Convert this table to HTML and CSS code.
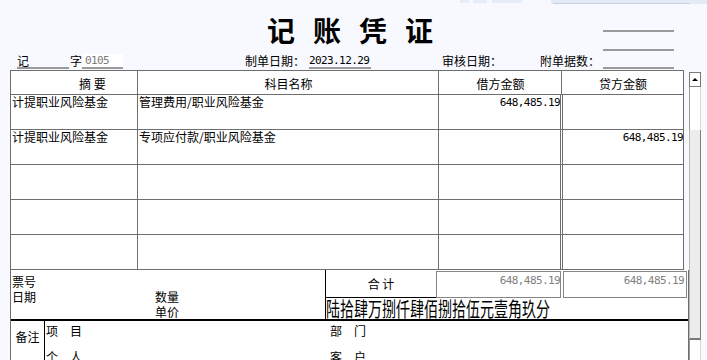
FILE: index.html
```html
<!DOCTYPE html>
<html lang="zh-CN">
<head>
<meta charset="utf-8">
<title>记账凭证</title>
<link rel="stylesheet" href="styles.css">
</head>
<body>
<div class="topbar">
  <span class="seg s1"></span><span class="seg s2"></span><span class="seg s3"></span>
  <span class="tab"><span class="tab-line"></span></span>
</div>
<div class="page">
  <div class="sheet">
    <div class="head">
      <h1 class="title">记账凭证</h1>
      <div class="sign"><i class="sline"></i><i class="sline l2"></i></div>
    </div>
    <div class="meta">
      <span class="fld f-word">记</span>
      <span class="lbl zi">字</span>
      <span class="fld f-no num">0105</span>
      <span class="lbl l-date">制单日期：</span>
      <span class="fld f-date num">2023.12.29</span>
      <span class="lbl l-audit">审核日期：</span>
      <span class="lbl l-att">附单据数：</span>
      <span class="fld f-att"></span>
    </div>
    <div class="ledger">
      <div class="row hdr">
        <div class="c c1 h-zy">摘&nbsp;要</div>
        <div class="c c2">科目名称</div>
        <div class="c c3">借方金额</div>
        <div class="c c4">贷方金额</div>
      </div>
      <div class="row">
        <div class="c c1">计提职业风险基金</div>
        <div class="c c2">管理费用/职业风险基金</div>
        <div class="c c3 num amt">648,485.19</div>
        <div class="c c4 num amt"></div>
      </div>
      <div class="row">
        <div class="c c1">计提职业风险基金</div>
        <div class="c c2">专项应付款/职业风险基金</div>
        <div class="c c3 num amt"></div>
        <div class="c c4 num amt">648,485.19</div>
      </div>
      <div class="row"><div class="c c1"></div><div class="c c2"></div><div class="c c3"></div><div class="c c4"></div></div>
      <div class="row"><div class="c c1"></div><div class="c c2"></div><div class="c c3"></div><div class="c c4"></div></div>
      <div class="row"><div class="c c1"></div><div class="c c2"></div><div class="c c3"></div><div class="c c4"></div></div>
    </div>
    <div class="lower">
      <div class="sum">
        <div class="misc">
          <div class="col-a"><span>票号</span><span>日期</span></div>
          <div class="col-b"><span>数量</span><span>单价</span></div>
        </div>
        <div class="totals">
          <div class="tot-row">
            <div class="tot-label">合&nbsp;计</div>
            <div class="tot-box num">648,485.19</div>
            <div class="tot-box b2 num">648,485.19</div>
          </div>
          <div class="words"><span class="words-txt">陆拾肆万捌仟肆佰捌拾伍元壹角玖分</span></div>
        </div>
      </div>
      <div class="remarks">
        <div class="rm-label">备注</div>
        <div class="rm-body">
          <div class="rm-col"><span>项　目</span><span>个　人</span></div>
          <div class="rm-col c-right"><span>部　门</span><span>客　户</span></div>
        </div>
      </div>
    </div>
  </div>
  <div class="vscroll">
    <div class="sb-btn"><span class="sb-arrow"></span></div>
    <div class="sb-track"></div>
    <div class="sb-thumb"></div>
    <div class="sb-track rest"></div>
  </div>
</div>
</body>
</html>
```

FILE: styles.css
```css
html, body {
  margin: 0;
  padding: 0;
}
body {
  background: #f7f9fe;
  font-family: "Noto Sans CJK SC", "Noto Sans", sans-serif;
  font-size: 12px;
  color: #000;
  width: 707px;
  height: 360px;
  overflow: hidden;
}
.num {
  font-family: "DejaVu Sans Mono", "Liberation Mono", monospace;
  font-size: 11px;
  letter-spacing: -0.6px;
}

/* top strip */
.topbar {
  height: 4px;
  display: flex;
  align-items: stretch;
}
.seg {
  background: #e6edf8;
  height: 3px;
}
.s1 { margin-left: 460px; width: 9px; }
.s2 { margin-left: 4px; width: 14px; }
.s3 { margin-left: 5px; width: 30px; }
.tab {
  margin-left: auto;
  width: 156px;
  background: #e3ebf7;
  display: flex;
  align-items: flex-end;
}
.tab-line {
  display: block;
  margin-left: 2px;
  width: 137px;
  height: 1px;
  background: #c6d2e4;
}

.page {
  display: flex;
}
.sheet {
  width: 689px;
  flex-shrink: 0;
}

/* title */
.head {
  height: 48px;
  display: flex;
}
.title {
  margin: 12px 0 0 267px;
  font-size: 28px;
  line-height: 28px;
  height: 28px;
  letter-spacing: 18px;
  font-weight: bold;
  white-space: nowrap;
}
.sign {
  margin-left: auto;
  margin-right: 15px;
  width: 71px;
  padding-top: 26px;
}
.sline {
  display: block;
  height: 2px;
  background: #9a9a9a;
}
.sline.l2 { margin-top: 17px; }

/* meta */
.meta {
  height: 18px;
  box-sizing: border-box;
  padding-top: 2px;
  display: flex;
  align-items: flex-start;
  white-space: nowrap;
}
.lbl, .fld {
  display: block;
  height: 13px;
  line-height: 13px;
}
.fld {
  border-bottom: 2px solid #9a9a9a;
}
.f-word { margin-left: 17px; width: 52px; }
.zi { margin-left: 1px; width: 12px; }
.f-no {
  width: 38px;
  padding-left: 3px;
  background: #fff;
  color: #7a7a7a;
}
.l-date { margin-left: 122px; width: 60px; }
.f-date { margin-left: 4px; width: 62px; }
.l-audit { margin-left: 71px; width: 60px; }
.l-att { margin-left: 38px; width: 60px; }
.f-att { margin-left: 3px; width: 71px; }

/* ledger */
.ledger {
  margin-left: 10px;
  width: 673px;
  border-left: 1px solid #6e6e6e;
  border-top: 1px solid #6e6e6e;
  background: #fff;
}
.row {
  display: grid;
  grid-template-columns: 127px 301px 121px 124px;
  height: 35px;
}
.row.hdr {
  grid-template-columns: 127px 301px 123px 122px;
  height: 24px;
}
.c {
  box-sizing: border-box;
  border-bottom: 1px solid #6e6e6e;
  border-right: 1px solid #6e6e6e;
  line-height: 14px;
  padding-left: 1px;
  white-space: nowrap;
}
.row .c3 { border-right: none; }
.row .c4 { border-left: 3px double #6e6e6e; }
.hdr .c {
  line-height: 21px;
  padding-top: 2px;
  text-align: center;
}
.hdr .c3 { border-right: 1px solid #6e6e6e; }
.hdr .c4 { border-left: none; }
.hdr .h-zy { text-align: left; padding-left: 68px; }
.amt {
  text-align: right;
  padding-right: 0;
  padding-top: 1px;
  line-height: 13px;
}

/* lower */
.lower {
  margin-left: 10px;
  width: 677px;
  border-left: 1px solid #6e6e6e;
  border-right: 1px solid #6e6e6e;
}
.sum {
  height: 51px;
  box-sizing: border-box;
  border-bottom: 2px solid #000;
  display: flex;
}
.misc {
  width: 315px;
  box-sizing: border-box;
  border-right: 1px solid #000;
  display: flex;
  padding-top: 4px;
  background: #fff;
}
.misc span { display: block; line-height: 15px; }
.col-a { padding-left: 1px; width: 24px; }
.col-b { margin-left: 119px; padding-top: 15px; }
.totals {
  flex: 1;
  display: flex;
  flex-direction: column;
  background: #fff;
}
.tot-row {
  height: 28px;
  display: flex;
}
.tot-label {
  width: 110px;
  box-sizing: border-box;
  border-bottom: 1px solid #000;
  text-align: center;
  line-height: 27px;
}
.tot-box {
  margin-top: 1px;
  height: 27px;
  width: 125px;
  box-sizing: border-box;
  border: 1px solid #858585;
  color: #808080;
  text-align: right;
  line-height: 13px;
  padding-top: 2px;
  padding-right: 0;
}
.tot-box.b2 { margin-left: 2px; width: 124px; padding-right: 2px; }
.words {
  height: 21px;
  line-height: 21px;
  white-space: nowrap;
}
.words-txt {
  display: inline-block;
  font-size: 20px;
  transform: scaleX(0.7);
  transform-origin: left center;
}
.remarks {
  display: flex;
  height: 45px;
  background: #fff;
}
.rm-label {
  width: 34px;
  box-sizing: border-box;
  border-right: 1px solid #000;
  text-align: center;
  padding-top: 8px;
  line-height: 15px;
  font-size: 12px;
}
.rm-body {
  display: flex;
  padding-left: 1px;
  padding-top: 2px;
}
.rm-col {
  display: flex;
  flex-direction: column;
  gap: 11px;
}
.rm-col span { line-height: 15px; }
.rm-col.c-right { margin-left: 248px; }

/* scrollbar */
.vscroll {
  width: 12px;
  margin-top: 68px;
  display: flex;
  flex-direction: column;
}
.sb-btn {
  height: 15px;
  box-sizing: border-box;
  border: 1px solid #7a7a7a;
  background: #fff;
  display: flex;
  align-items: center;
  justify-content: center;
}
.sb-arrow {
  width: 0;
  height: 0;
  border-left: 3px solid transparent;
  border-right: 3px solid transparent;
  border-bottom: 3px solid #000;
}
.sb-track {
  height: 43px;
  box-sizing: border-box;
  border-left: 1px solid #9a9a9a;
  border-right: 1px solid #d8d8d8;
  background: #fff;
}
.sb-track.rest { height: 30px; }
.sb-thumb {
  height: 210px;
  box-sizing: border-box;
  background: #ececec;
  border-left: 1px solid #b8b8b8;
  border-right: 1px solid #808080;
  border-bottom: 2px solid #7a7a7a;
}
```
